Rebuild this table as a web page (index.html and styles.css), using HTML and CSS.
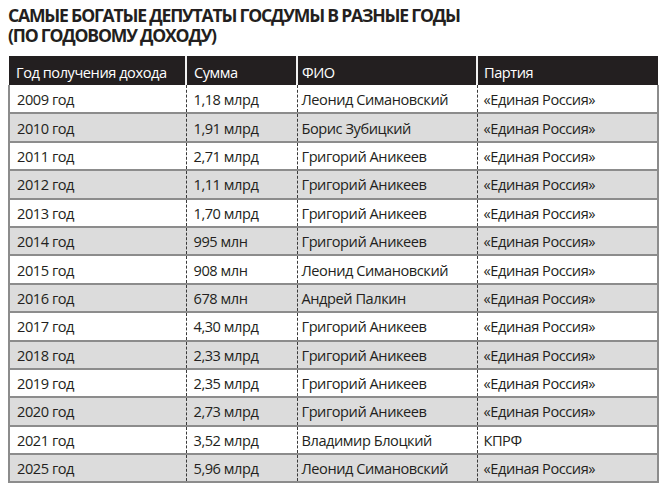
FILE: index.html
```html
<!DOCTYPE html>
<html lang="ru">
<head>
<meta charset="utf-8">
<title>Самые богатые депутаты Госдумы</title>
<link rel="stylesheet" href="styles.css">
</head>
<body>
<div class="page">
  <h1 class="title"><span class="title-line">САМЫЕ БОГАТЫЕ ДЕПУТАТЫ ГОСДУМЫ В РАЗНЫЕ ГОДЫ</span><span class="title-line">(ПО ГОДОВОМУ ДОХОДУ)</span></h1>
  <table class="data">
    <colgroup>
      <col class="c1"><col class="c2"><col class="c3"><col class="c4">
    </colgroup>
    <thead>
      <tr><th>Год получения дохода</th><th>Сумма</th><th class="name">ФИО</th><th class="party">Партия</th></tr>
    </thead>
    <tbody>
      <tr><td>2009 год</td><td>1,18 млрд</td><td class="name">Леонид Симановский</td><td class="party">«Единая Россия»</td></tr>
      <tr><td>2010 год</td><td>1,91 млрд</td><td class="name">Борис Зубицкий</td><td class="party">«Единая Россия»</td></tr>
      <tr><td>2011 год</td><td>2,71 млрд</td><td class="name">Григорий Аникеев</td><td class="party">«Единая Россия»</td></tr>
      <tr><td>2012 год</td><td>1,11 млрд</td><td class="name">Григорий Аникеев</td><td class="party">«Единая Россия»</td></tr>
      <tr><td>2013 год</td><td>1,70 млрд</td><td class="name">Григорий Аникеев</td><td class="party">«Единая Россия»</td></tr>
      <tr><td>2014 год</td><td>995 млн</td><td class="name">Григорий Аникеев</td><td class="party">«Единая Россия»</td></tr>
      <tr><td>2015 год</td><td>908 млн</td><td class="name">Леонид Симановский</td><td class="party">«Единая Россия»</td></tr>
      <tr><td>2016 год</td><td>678 млн</td><td class="name">Андрей Палкин</td><td class="party">«Единая Россия»</td></tr>
      <tr><td>2017 год</td><td>4,30 млрд</td><td class="name">Григорий Аникеев</td><td class="party">«Единая Россия»</td></tr>
      <tr><td>2018 год</td><td>2,33 млрд</td><td class="name">Григорий Аникеев</td><td class="party">«Единая Россия»</td></tr>
      <tr><td>2019 год</td><td>2,35 млрд</td><td class="name">Григорий Аникеев</td><td class="party">«Единая Россия»</td></tr>
      <tr><td>2020 год</td><td>2,73 млрд</td><td class="name">Григорий Аникеев</td><td class="party">«Единая Россия»</td></tr>
      <tr><td>2021 год</td><td>3,52 млрд</td><td class="name">Владимир Блоцкий</td><td class="party">КПРФ</td></tr>
      <tr><td>2025 год</td><td>5,96 млрд</td><td class="name">Леонид Симановский</td><td class="party">«Единая Россия»</td></tr>
    </tbody>
  </table>
</div>
</body>
</html>
```

FILE: styles.css
```css
html, body {
  margin: 0;
  padding: 0;
  background: #ffffff;
}

.page {
  padding: 5px 8px 0 8px;
  font-family: "Open Sans", "Noto Sans", "Liberation Sans", sans-serif;
  color: #231f20;
}

.title {
  margin: 0;
  font-family: "Open Sans", "Noto Sans", sans-serif;
  font-size: 17.6px;
  line-height: 20px;
  font-weight: 700;
  letter-spacing: -1.2px;
  color: #231f20;
}

.title-line {
  display: block;
  height: 20px;
}

.data {
  margin-top: 11px;
  width: 651px;
  border-collapse: collapse;
  table-layout: fixed;
  font-size: 14.6px;
  letter-spacing: -0.45px;
}

.c1 { width: 177px; }
.c2 { width: 111px; }
.c3 { width: 180px; }
.c4 { width: auto; }

.data th {
  background: #231f20;
  color: #ffffff;
  font-weight: 400;
  text-align: left;
  height: 29px;
  padding: 2px 7px 0 7px;
  box-sizing: border-box;
  border-left: 2px solid #f2f2f2;
}

.data th:first-child {
  border-left: none;
}

.data td {
  height: 28.4px;
  box-sizing: border-box;
  padding: 0 7px;
  border-bottom: 2px solid #8c8c8c;
  border-left: 1px dashed #3a3a3a;
  color: #231f20;
  white-space: nowrap;
}

.data .name { padding-left: 4px; }
.data .party { padding-left: 6px; }

.data td:first-child {
  border-left: 2px solid #8c8c8c;
}

.data td:last-child {
  border-right: 2px solid #8c8c8c;
}

.data tbody tr:nth-child(even) td {
  background: #dcdcdc;
}
```
